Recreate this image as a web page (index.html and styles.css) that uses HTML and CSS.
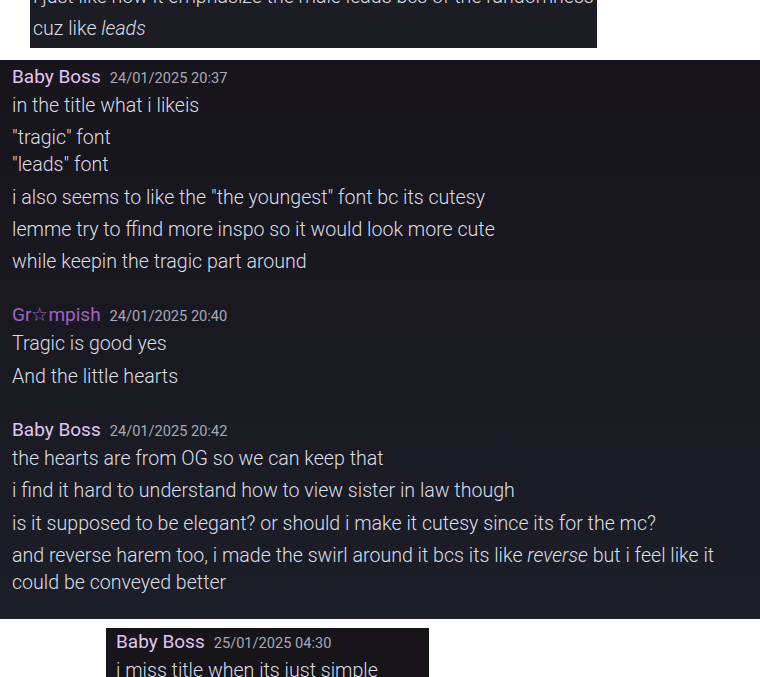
FILE: index.html
```html
<!DOCTYPE html>
<html lang="en">
<head>
<meta charset="UTF-8" />
<meta name="viewport" content="width=device-width, initial-scale=1" />
<title>chat</title>
<link rel="stylesheet" href="styles.css">
</head>
<body>

<div class="snippet snippet-top">
  <p>i just like how it emphasize the male leads bcs of the randomness</p>
  <p>cuz like <em>leads</em></p>
</div>

<div class="chat">
  <div class="group">
    <div class="head"><span class="name boss">Baby Boss</span><span class="time">24/01/2025 20:37</span></div>
    <p>in the title what i likeis</p>
    <p>"tragic" font<br>"leads" font</p>
    <p>i also seems to like the "the youngest" font bc its cutesy</p>
    <p>lemme try to ffind more inspo so it would look more cute</p>
    <p>while keepin the tragic part around</p>
  </div>

  <div class="group">
    <div class="head"><span class="name grump">Gr☆mpish</span><span class="time">24/01/2025 20:40</span></div>
    <p>Tragic is good yes</p>
    <p>And the little hearts</p>
  </div>

  <div class="group">
    <div class="head"><span class="name boss">Baby Boss</span><span class="time">24/01/2025 20:42</span></div>
    <p>the hearts are from OG so we can keep that</p>
    <p>i find it hard to understand how to view sister in law though</p>
    <p>is it supposed to be elegant? or should i make it cutesy since its for the mc?</p>
    <p>and reverse harem too, i made the swirl around it bcs its like <em>reverse</em> but i feel like it could be conveyed better</p>
  </div>
</div>

<div class="snippet snippet-bottom">
  <div class="head"><span class="name boss">Baby Boss</span><span class="time">25/01/2025 04:30</span></div>
  <p>i miss title when its just simple</p>
</div>

</body>
</html>
```

FILE: styles.css
```css
body {
  margin: 0;
  background: #fff;
  font-family: Roboto, "Noto Sans", sans-serif;
  color: #dcdee9;
  overflow: hidden;
}
p {
  margin: 5.2px 0 0 0;
  font-size: 19.6px;
  font-weight: 300;
  line-height: 27px;
}
.head + p {
  margin-top: 0;
}
em {
  font-style: italic;
}

.snippet {
  background: #1c1c24;
}
.snippet-top {
  width: 564px;
  margin: -17px 0 0 30px;
  padding: 0 0 6px 3px;
}
.snippet-top p:first-child {
  margin-top: 0;
}
.snippet-bottom {
  width: 313px;
  margin: 9px 0 0 106px;
  padding: 0 0 4px 10px;
  background: #17141a;
}

.chat {
  margin-top: 12px;
  padding: 3px 12px 23px 12px;
  background: linear-gradient(#17141b, #1c1e28);
}
.group + .group {
  margin-top: 26.5px;
}

.head {
  display: flex;
  align-items: baseline;
  gap: 9px;
  height: 28px;
  padding-top: 1px;
  line-height: 26px;
}
.name {
  font-size: 19px;
  font-weight: 400;
}
.boss {
  color: #e0c6f8;
}
.grump {
  color: #a261c6;
}
.time {
  font-size: 14.6px;
  color: #a7a9b8;
}
```
